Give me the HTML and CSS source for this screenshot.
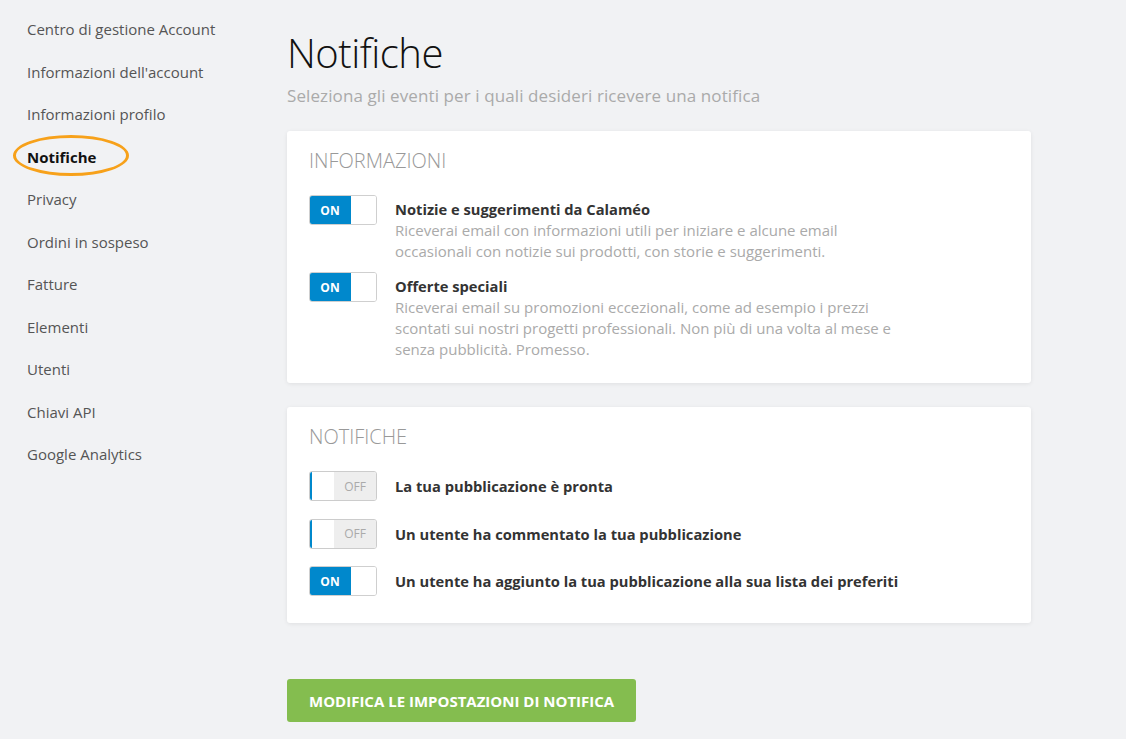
FILE: index.html
```html
<!DOCTYPE html>
<html lang="it">
<head>
  <meta charset="UTF-8" />
  <meta name="viewport" content="width=device-width, initial-scale=1.0"/>
  <title>Notifiche — Calaméo</title>
  <link rel="stylesheet" href="styles.css">
</head>
<body>
  <div class="page">
    <nav class="sidebar">
      <a href="#">Centro di gestione Account</a>
      <a href="#">Informazioni dell'account</a>
      <a href="#">Informazioni profilo</a>
      <a href="#" class="active">Notifiche</a>
      <a href="#">Privacy</a>
      <a href="#">Ordini in sospeso</a>
      <a href="#">Fatture</a>
      <a href="#">Elementi</a>
      <a href="#">Utenti</a>
      <a href="#">Chiavi API</a>
      <a href="#">Google Analytics</a>
    </nav>

    <main class="content">
      <h1>Notifiche</h1>
      <p class="subtitle">Seleziona gli eventi per i quali desideri ricevere una notifica</p>

      <section class="card">
        <h2>INFORMAZIONI</h2>
        <div class="option">
          <span class="switch on"><span class="label">ON</span><span class="knob"></span></span>
          <div class="text">
            <strong>Notizie e suggerimenti da Calaméo</strong>
            <p>Riceverai email con informazioni utili per iniziare e alcune email occasionali con notizie sui prodotti, con storie e suggerimenti.</p>
          </div>
        </div>
        <div class="option">
          <span class="switch on"><span class="label">ON</span><span class="knob"></span></span>
          <div class="text">
            <strong>Offerte speciali</strong>
            <p>Riceverai email su promozioni eccezionali, come ad esempio i prezzi scontati sui nostri progetti professionali. Non più di una volta al mese e senza pubblicità. Promesso.</p>
          </div>
        </div>
      </section>

      <section class="card card-list">
        <h2>NOTIFICHE</h2>
        <div class="option single">
          <span class="switch off"><span class="knob"></span><span class="label">OFF</span></span>
          <strong>La tua pubblicazione è pronta</strong>
        </div>
        <div class="option single">
          <span class="switch off"><span class="knob"></span><span class="label">OFF</span></span>
          <strong>Un utente ha commentato la tua pubblicazione</strong>
        </div>
        <div class="option single">
          <span class="switch on"><span class="label">ON</span><span class="knob"></span></span>
          <strong>Un utente ha aggiunto la tua pubblicazione alla sua lista dei preferiti</strong>
        </div>
      </section>

      <button class="save">MODIFICA LE IMPOSTAZIONI DI NOTIFICA</button>
    </main>
  </div>
</body>
</html>
```

FILE: styles.css
```css
body {
  font-family: 'Open Sans', sans-serif;
  background: #f1f2f4;
  margin: 0;
  padding: 0;
  color: #333;
}

.page {
  display: flex;
}

.sidebar {
  width: 287px;
  padding: 18px 0 0 27px;
  box-sizing: border-box;
  display: flex;
  flex-direction: column;
  flex-shrink: 0;
}

.sidebar a {
  position: relative;
  font-size: 15px;
  line-height: 22px;
  margin-bottom: 20.5px;
  color: #555;
  text-decoration: none;
  width: max-content;
}

.sidebar a.active {
  color: #111;
  font-weight: 700;
}

.sidebar a.active::after {
  content: "";
  position: absolute;
  left: -14px;
  top: -11px;
  width: 110px;
  height: 35px;
  border: 3px solid #f7a11a;
  border-radius: 50%;
}

.content {
  width: 744px;
  padding-top: 26px;
}

h1 {
  font-family: 'Open Sans', sans-serif;
  font-weight: 300;
  font-size: 40px;
  line-height: 54px;
  margin: 0;
  color: #111;
  letter-spacing: -0.5px;
}

.subtitle {
  font-size: 17px;
  color: #aaa;
  margin: 4px 0 23px;
  line-height: 24px;
  letter-spacing: 0.1px;
}

.card {
  background: #fff;
  border-radius: 3px;
  box-shadow: 0 1px 4px rgba(0,0,0,0.08);
  padding: 18px 22px 23px;
  margin-bottom: 24px;
}

.card-list {
  padding-bottom: 27px;
}

.card h2 {
  font-weight: 300;
  font-size: 20px;
  color: #999;
  margin: 0 0 22px;
  line-height: 24px;
}

.option {
  display: flex;
  align-items: flex-start;
  gap: 18px;
  margin-bottom: 10px;
}

.option:last-child {
  margin-bottom: 0;
}

.option.single {
  align-items: center;
  margin-bottom: 17.5px;
}

.option.single:last-child {
  margin-bottom: 0;
}

.option strong {
  font-size: 14.7px;
  font-weight: 700;
  color: #333;
  line-height: 20px;
}

.text {
  padding-top: 3px;
  max-width: 512px;
}

.text p {
  margin: 0;
  font-size: 15px;
  color: #aaa;
  line-height: 21px;
}

.switch {
  display: flex;
  width: 68px;
  height: 30px;
  border: 1px solid #ccc;
  border-radius: 3px;
  box-sizing: border-box;
  overflow: hidden;
  flex-shrink: 0;
}

.switch .label {
  width: 42px;
  display: flex;
  align-items: center;
  justify-content: center;
  font-size: 12px;
  font-weight: 700;
}

.switch .knob {
  flex: 1;
  background: #fff;
}

.switch.on {
  border-color: #cfcfcf;
}

.switch.on .label {
  background: #0088cc;
  color: #fff;
  margin: -1px 0 -1px -1px;
}

.switch.off .knob {
  border-left: 2px solid #0088cc;
}

.switch.off .label {
  background: #eee;
  color: #aaa;
  font-weight: 400;
}

.save {
  margin-top: 32px;
  padding: 0 22px;
  height: 43px;
  border: none;
  border-radius: 3px;
  background: #84bd4f;
  color: #fff;
  font-family: 'Open Sans', sans-serif;
  font-size: 15px;
  font-weight: 700;
  cursor: pointer;
}
```
